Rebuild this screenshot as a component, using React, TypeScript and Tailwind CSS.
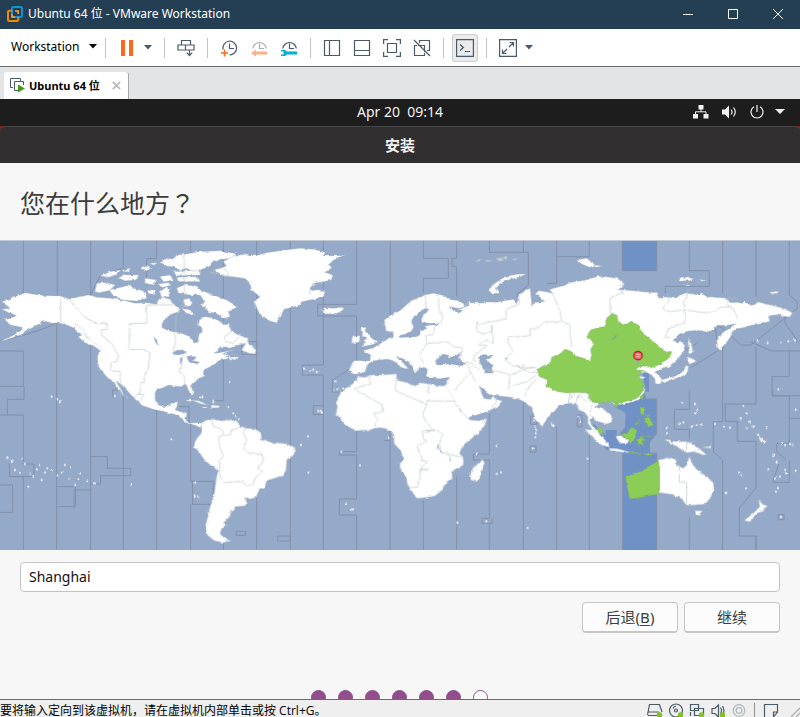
import React from "react";

const uiFont = "font-['Noto_Sans','Noto_Sans_CJK_SC',sans-serif]";
const headingFont = "font-['Noto_Sans_CJK_TC',sans-serif]";

function Separator() {
  return <span className="h-5 w-px shrink-0 bg-[#c4c4c4]" />;
}

function Caret({ className = "" }: { className?: string }) {
  return (
    <svg viewBox="0 0 8 5" className={`h-[5px] w-2 shrink-0 ${className}`} aria-hidden="true">
      <path d="M0 0h8L4 4.6z" fill="currentColor" />
    </svg>
  );
}

function ToolButton({ label, children }: { label: string; children: React.ReactNode }) {
  return (
    <button type="button" aria-label={label} className="size-[18px] shrink-0 text-[#4a5a68]">
      <svg viewBox="0 0 18 18" className="size-[18px]" fill="none" stroke="currentColor" strokeWidth="1.2">
        {children}
      </svg>
    </button>
  );
}

function TitleBar() {
  return (
    <header className="flex h-[29px] shrink-0 items-center bg-[#243f53] pb-0.5 text-white">
      <svg viewBox="0 0 16 16" className="ml-[7px] size-4 shrink-0" fill="none" strokeWidth="2">
        <rect x="5" y="1" width="10" height="10" rx="1.5" stroke="#0b95d3" />
        <path d="M5 4.8H2.200Q1 4.800 1 6v7.700Q1 15 2.200 15H10Q11.200 15 11.200 13.700V11" stroke="#f38b00" />
        <path d="M5 8v3h3M11.200 8V5H8" stroke="#f9a72b" strokeWidth="1.600" />
      </svg>
      <h1 className="ml-[5px] flex-1 text-[12px] leading-4">Ubuntu 64 位 - VMware Workstation</h1>
      <button type="button" aria-label="Minimize" className="flex h-[27px] w-[45px] items-center justify-center">
        <svg viewBox="0 0 10 10" className="size-[10px]" stroke="white"><path d="M0 5.500h10" /></svg>
      </button>
      <button type="button" aria-label="Maximize" className="flex h-[27px] w-[45px] items-center justify-center">
        <svg viewBox="0 0 10 10" className="size-[10px]" stroke="white" fill="none"><path d="M.5.5h9v9h-9z" /></svg>
      </button>
      <button type="button" aria-label="Close" className="flex h-[27px] w-[45px] items-center justify-center">
        <svg viewBox="0 0 10 10" className="size-[10px]" stroke="white"><path d="M0 0l10 10M10 0L0 10" /></svg>
      </button>
    </header>
  );
}

function Toolbar() {
  return (
    <nav className="flex h-[38px] shrink-0 items-center border-b border-[#6d6d6d] bg-white">
      <button type="button" className="ml-[11px] flex w-[94px] shrink-0 items-center pb-0.5 text-[12px] leading-4 text-black">
        <span className="w-[78px] text-left">Workstation</span>
        <Caret />
      </button>
      <Separator />
      <div className="flex w-[58px] shrink-0 items-center pl-[15px]">
        <button type="button" aria-label="Pause" className="flex w-3 justify-between">
          <span className="h-4 w-1 bg-[#ff671b]" />
          <span className="h-4 w-1 bg-[#ff671b]" />
        </button>
        <Caret className="ml-[11px] text-[#4a5a68]" />
      </div>
      <Separator />
      <div className="flex w-[42px] shrink-0 justify-center">
        <ToolButton label="Send keys">
          <path d="M4.500 6V1.500h9V6M1 6h7.500v5H1zM8.500 6H17v5H8.500zM12.500 11v5.500M9.800 13.700l2.700 3 2.700-3" />
        </ToolButton>
      </div>
      <Separator />
      <div className="flex w-[102px] shrink-0 justify-center gap-3">
        <ToolButton label="Take snapshot">
          <path d="M3.100 10.500A6.800 6.800 0 1 1 9.500 15.800M9.500 4.500v5h4.500" />
          <path d="M4.500 10.500v7M1 14h7" stroke="#ff671b" strokeWidth="1.500" />
        </ToolButton>
        <ToolButton label="Revert snapshot">
          <path d="M2.800 9.500A6.800 6.800 0 0 1 16.300 9.500M9.500 4.500v5h4.500" stroke="#a9b0b7" />
          <path d="M1 14l5-3.500v2h11v3H6v2z" fill="#ffae87" stroke="none" />
        </ToolButton>
        <ToolButton label="Manage snapshots">
          <path d="M2.800 9.500A6.800 6.800 0 0 1 16.300 9.500M9.500 4.500v5h4.500" />
          <path d="M1 11h4l2 1.500h10v3H7L5 17H1v-1.500h2.500v-3H1z" fill="#00b2d6" stroke="none" />
        </ToolButton>
      </div>
      <Separator />
      <div className="flex w-[132px] shrink-0 justify-center gap-3">
        <ToolButton label="Show library"><path d="M1.500 1.500h15v15h-15zM6.500 1.500v15" /></ToolButton>
        <ToolButton label="Thumbnail bar"><path d="M1.500 1.500h15v15h-15zM1.500 11.500h15" /></ToolButton>
        <ToolButton label="Full screen">
          <path d="M.6 5V.6H5M13 .6h4.400V5M17.400 13v4.400H13M5 17.400H.6V13M4.500 4.500h9v9h-9z" />
        </ToolButton>
        <ToolButton label="Unity"><path d="M6.500 4V1.500h10v10H14M11.500 14v2.500h-10v-10H4M5 6.500h6.500V13M1 1l16 16" /></ToolButton>
      </div>
      <Separator />
      <div className="flex w-[42px] shrink-0 justify-center">
        <span className="flex h-7 w-[26px] items-center justify-center rounded-[3px] border border-[#ccc] bg-[#e9ebec]">
          <ToolButton label="Console view"><path d="M.6.6h16.800v16.800H.6zM4 5.500l3.500 3L4 11.500M9 12.500h5" /></ToolButton>
        </span>
      </div>
      <Separator />
      <div className="flex shrink-0 items-center gap-2 pl-3">
        <ToolButton label="Stretch guest">
          <path d="M.6.6h16.800v16.800H.6zM10.500 3.500h4v4M14.500 3.500l-4.500 4.500M7.500 14.500h-4v-4M3.500 14.500L8 10" />
        </ToolButton>
        <Caret className="text-[#4a5a68]" />
      </div>
    </nav>
  );
}

function TabStrip() {
  return (
    <div className="flex h-8 shrink-0 items-end bg-[#e3e4e6] pl-1">
      <div className="flex h-[27px] w-[125px] items-center rounded-t-[3px] border-r border-[#aaa] bg-white pl-1.5">
        <svg viewBox="0 0 15 15" className="size-[15px] shrink-0" fill="none" stroke="#4a5a68">
          <path d="M3 9.500H.5v-9h10V3" />
          <path d="M13.500 7V3.500h-9v9H8" />
          <path d="M8 6.500v8l7-4z" fill="#3f9c14" stroke="none" />
        </svg>
        <span className="ml-1 w-[83px] whitespace-nowrap text-[11px] font-bold leading-4 text-black">Ubuntu 64 位</span>
        <button type="button" aria-label="Close tab">
          <svg viewBox="0 0 9 9" className="size-[9px]" stroke="#bdbdbd" strokeWidth="1.800"><path d="M.8.8l7.400 7.400M8.200.8L.8 8.200" /></svg>
        </button>
      </div>
    </div>
  );
}

function GuestBar() {
  return (
    <div className="grid h-[27px] shrink-0 grid-cols-[1fr_auto_1fr] items-center bg-[#1d1d1d] pb-0.5 text-[#f2f2f2]">
      <time className="col-start-2 whitespace-pre text-[14px] leading-5">Apr 20  09:14</time>
      <div className="flex items-center justify-end pr-[15px]">
        <svg viewBox="0 0 16 14" className="mr-[13px] h-3.5 w-4" fill="currentColor">
          <path d="M5.500 0h5v4.500h-5zM0 9h5v4.500H0zM10.500 9h5v4.500h-5z" />
          <path d="M8 4v3M2.500 9V6.800h10.500V9" fill="none" stroke="currentColor" />
        </svg>
        <svg viewBox="0 0 15 14" className="mr-[13px] h-3.5 w-[15px]" fill="currentColor">
          <path d="M0 4.500h3L7 .5v13l-4-4H0z" />
          <path d="M9 4.500q2 2.500 0 5M11.500 2.500q3.500 4.500 0 9" fill="none" stroke="currentColor" strokeWidth="1.200" />
        </svg>
        <svg viewBox="0 0 14 14" className="mr-[11px] size-3.5" fill="none" stroke="currentColor" strokeWidth="1.200">
          <path d="M4 1.800a6 6 0 1 0 6 0M7 0v7" />
        </svg>
        <svg viewBox="0 0 10 5" className="h-[5px] w-2.5" fill="currentColor"><path d="M0 0h10L5 5z" /></svg>
      </div>
    </div>
  );
}

/* Small islands as [x, y] points in map units. */
const islets: number[][] = [
  [690, 427], [912, 386], [931, 391], [940, 389], [950, 396], [1007, 424], [1003, 450], [1015, 449], [1029, 446],
  [924, 589], [903, 615], [925, 698], [955, 513], [962, 513], [966, 518], [514, 598], [584, 770], [595, 770], [586, 728], [391, 735],
  [1024, 635], [1080, 676], [1038, 790], [1056, 808], [1164, 593], [1490, 618], [1430, 642], [1490, 702], [1503, 697],
  [1372, 848], [1459, 844], [1602, 540], [1606, 560], [1608, 570], [1607, 580], [1606, 592], [1598, 625], [1583, 864],
  [1735, 530], [1740, 545], [1763, 656], [2047, 488], [2085, 492], [2092, 510], [2088, 520], [2050, 547], [2038, 552],
  [2000, 565], [1998, 580], [2075, 560], [2090, 556], [2105, 554], [2145, 552], [2172, 560], [2190, 563], [2230, 497],
  [2222, 537], [2240, 520], [2250, 545], [2240, 565], [2260, 560], [2275, 585], [2287, 597], [2297, 607], [2300, 563],
  [2320, 645], [2345, 610], [2355, 615], [2370, 612], [2378, 613], [2305, 688], [2330, 668], [2340, 710], [2355, 690],
  [2358, 700], [2325, 715], [2387, 509], [2387, 692], [2334, 744], [2328, 755], [2238, 745], [2179, 759], [2343, 831],
  [2217, 698], [2225, 705], [2273, 302], [2303, 309], [2342, 307], [2365, 304], [2385, 302], [2335, 448],
  [65, 655], [92, 700], [110, 688], [135, 700], [155, 692], [175, 705], [185, 697], [208, 715], [235, 718], [262, 722],
  [120, 675], [142, 685], [195, 675], [210, 682], [240, 700], [75, 672], [100, 710], [125, 720], [225, 735], [285, 730],
  [45, 690], [60, 698], [85, 740], [22, 655], [38, 662], [155, 470], [172, 478], [180, 484], [345, 468],
  [570, 480], [600, 473], [640, 486], [700, 520], [708, 528], [715, 538], [712, 552], [607, 472],
];

function WorldMap() {
  return (
    <svg viewBox="0 0 2400 930" className="block h-auto w-full shrink-0" role="img" aria-label="World time zone map">
      <defs>
        <filter id="coast" x="0" y="0" width="100%" height="100%" filterUnits="userSpaceOnUse" colorInterpolationFilters="sRGB">
          <feTurbulence type="fractalNoise" baseFrequency="0.07" numOctaves="2" seed="4" />
          <feDisplacementMap in="SourceGraphic" scale="9" xChannelSelector="R" yChannelSelector="G" />
        </filter>
      </defs>
      <rect width="2400" height="930" fill="#95a9c9" />

      {/* selected UTC+8 band */}
      <g fill="#6f91c6">
        <path d="M1867 0h103v92h-103z" />
        <path d="M1925 380h22v75h-12l3 22h30l2 103-20 25v32l20 3v290h-102V640l-48-10-50-65 12-12 35 32v-15h33v22l25-30 2-44-35-18 20-15 55-10 20-25z" />
      </g>

      {/* zone boundaries over water */}
      <g fill="none" stroke="#8290aa" strokeWidth="3">
        <path d="M70 0v160M172 0v167M272 0v165M370 0v83L300 108l-28 57M470 0v56h-30v80M572 0v38M670 0v245M770 0v930M871 0v930M970 0v375h-63v30h63v525M1070 0v193h-117v35h117v145l-73 48v35h20M1171 0v225" />
        <path d="M0 333h70v106H0M0 302Q90 285 170 250V930M272 310v620M340 470h-2v-20h25M370 470v460M470 500v430M572 550v174h68v70M572 724h6v69h62M572 793v137M670 330v152h-33M670 902v28M748 305h22v38h-45v-28M537 500h30v50M970 497h-30v27h30M833 888h38v15h-38zM709 874h28v12h-28z" />
        <path d="M70 930V710h32v-38H70V525H22V478h50V440M0 525h22M0 735h38v82H0M70 710H28v-40M172 740h55v60h-55M272 650h50v35h70v22h-90v25h-30M272 750h-50v55" />
        <path d="M1270 0v55h75v60h-75v43M1370 0v55h-14v24h14v90M1468 0v37h117v98l-33 27v15M1570 0v37M1670 0v130h-28M1670 50h98V0M1867 0v92h103V0M2068 0v92h60v47h-132v20M2168 0v160M2268 0v170M2368 0v165l24 20v20l-140 110h-30l-54-50v0l-22-10 4 44 22 22-100 62M2168 320v225h-28v90l28 25v270M2092 315M2250 305l65 28h85M2355 230v20l40 55M2268 320v172h-92v52h36v60h56v140l-50 60v84h50v42M2368 330v80h-52v57h52v68h32M2368 467h32M2368 535v75h-38v25l28 24" />
        <path d="M1070 570v65h-52v10h52v132h-52v48h52v105M1170 570v32h-18M1170 602v328M1270 780v150M1370 710v220M1468 520v122h-48v18h48v175h-22v15h30v-15M1468 850v80M1570 480v450M1670 560v370M1768 570v360M1868 640v290M1970 637v293M1970 477v103l-20 25M1938 477h32M2068 450v58h-45v60h45v30M2068 830v100M2318 450v18h50M2268 888v42M2368 660v67h-50l18-55M2334 824h18v15h-18zM1590 618h18v18h-18zM1592 528h18v25h-18zM1732 525h14v36h-14zM1990 370l100-60M1995 368l45-20" />
      </g>

      <g filter="url(#coast)">
        <g fill="#fff" stroke="#b5c0c6" strokeWidth="1" strokeLinejoin="round">
          {/* North and Central America */}
          <path d="M5 208l25-3-10-10-12-12 22-3 10-10 20-5 15-7 25 5 35 4 45 1 30 10 20-6 35-7 25 7 40 3 45 7 30 8 30-2 35 5 5-13 10-8 25 6 10 17 20 10-5 10-20 7-15 10-13 13-2 17 15 8 17 5 23 3 30 12 15 20 10-5 0-20 12-10-2-13-10-7 5-20 15-5 30 5 15 10 15 10 10-5 5 15 5 10 15 8 20 7 13 8-3 10-25 7-30 7-25-2-15 20 30-5 25-5 5 10-30 10 20 2 20-2-5 10-25-5-30 7-10 10-15 8-20 10v20l-15 5-15 15-7 10 7 15-2 10-8-5-7-15-3-10-20 5-35-5-20 10-15 2-5 13v20l10 15 15 5 20-2 5-10 18-3-3 15-5 10 15 5 20 3-3 22 10 10 23-2 17 2-6 13-6-3-15-7-15-2-20-13-10-12-30-8-20-5-25-5-35-12-10-13-22-18-10-12-20-20-15-10 20 35 20 20-35-30-10-22-20-13-20-22-10-15v-30l7-10-2-10-20-15-25-20-20-15-13-13-17-7-25-7h-25l-25-8-10 10-15 8-15 7-20 15-25 10-25 8-15 4 35-16 20-11 10-13-15-4-20-3-15-10-2-10 27-5 5-5z" />
          <path d="M235 290l20 18 30 12 20 15-5-15-25-16-25-20zM222 250l20 18 25 30-15-30z" />
          {/* Canadian Arctic */}
          <path d="M480 65l20-10 20 3 10-13 30-3 40-7 60-3 50 10-20 13-50 7-15 18-25 10-20 5-20-10-20 5-20-10-20-2zM300 108l30-13 30-5-15 15-15 5zM285 155l5-25 30-2 25 7-15 15-30 8zM328 150l42-10 20-5 10 10 30 8 10 22-30 8-40-3-30-13zM355 115l20-10 40 0-5 15-35 2zM420 85l20-10 15 10-15 8zM435 115l35 5-10 15-25-5zM480 110l30-5 10 15-30 5zM520 95l80-5v15l-70 2zM530 112l60-2 10 15-65-1zM530 145l20-10 40 3 10 12 40 15 40 15 32 20-17 10-10 5 5 15-20 5-20-15-25-5-10-15-15-5 15-10-15-20h-30l-30-5zM480 155l20-15 12 10-7 20-20 2zM550 180l20-5 8 20-23 5zM545 205l25 5 15 15-25-5zM365 92l25-8-5 12zM450 70l20-2-5 9zM475 132l30-4 8 8-28 6zM445 148l20 3-4 14-16-5z" />
          {/* Greenland, Iceland, Newfoundland */}
          <path d="M640 92l20-7 20-7-10-13 30-17 40-6 25 6 35-10 40-6 60-7 40 3 35 9-5 11 65-1-35 13-15 15 10 10-25 10 28 10-8 15-18 5-32 5-10 20 45 5-5 15-30 8-35 7-5 10-30 8-20 5-5 17-15 23-20-5-20-11-18-22-7-25 15-15-25-20-5-20-20-15-30-5-30-2-10-8zM962 207l10 6-2-10 30 2 25-3 3 8-13 8-20 5-20-3zM725 330l20-32 5 17 18 15-3 12-25-4z" />
          {/* South America */}
          <path transform="translate(390 450)" d="M213 103l12-11 20-5 15 3 15 2 30-2 20 8 5 10 20 7 25 2 13 8 7 15-5 12 15-2 30 8 35 4 23 11 4 10-17 22-10 7-2 28-10 18-18 4-30 10-5 18-20 15-7 17-18 5-17-5 9 18-7 7-30 3-3 12-12 3 2 10-12 15-10 8 10 7-15 10-5 17 15 13 15 7-22 6-28-8-18-15-5-30 8-30 8-35 10-30 5-35 5-37-23-13-20-20-15-23-13-10 3-17 10-15 10-10v-15z" />
          <path d="M560 480l35 2 30 13-20-3-25-10-18 2zM635 495l25 3-5 5-22 0zM676 499h12v3h-12zM608 501h12v3h-12zM575 452l9 10-6-2z" />
          {/* Europe and Asia */}
          <path d="M1060 362h30l20 1 2-18-22-13 25-7 15-7 15-10 17-10 16-3-2-20-18-2-5-33 20-15 27-13 25-22 25-15 25-10 25-5 35 8 10 10 30 4 17 10 0 10-18 3-25-5 10 10 30-5 15-8v-12l12 5 14-5 6 9 24-8 30 1 20-4 30-5 10 12 5-20 20-18 15-7 3 27 2 28 6-12 30-3-10-13-15-10 10-10 30 5 15 5-12-12 7-4 28-7 30-12 40-6 40-12 30 2 30 5 18 15-3 10-15 8 30 2 50 5 40 2-2 10 12 8 10-5 35 3 10-8 20-7 25 5 20-3 20 10 50 3 20 14 40-2 15 10 15-2 10-8 40 10 40 10 23 13-8 12-20-3-15-4-20 2-10 5 5 13-25 7-30 5-30 8-22 2-3 12-15 23-25 30-7-10-1-20 13-20 30-20 12-10-27 5-30 0-10 10-15 10-30-5-30 2-25 8-20 20 10 8 15-3 10 10-5 20-15 20-25 22-20 6-25 12 10 8 12 15-4 12-15 1-3-18-10-10-15-7-20 2-10 10 27 2-17 10 5 13 10 15v6l-15 22-20 8-25 6-25 4-25-9-15-3-15 10-10 7 15 5 15 5 17 13 6 12-3 12-15 5-10 3-5-8-17-4-10-13-8 10 5 15 13 12 12 13v12l-20-12-7-20-8-10v-20l-10-13-17-7-8-15-15-5-30 3-20 17-17 17-13 18-7 15-18-17-10-25-4-18-13-4-13-13-22-8-25-5-25-2-20-2-25-16-10-8-5-4 10 28 10 11 15 1 7-10 9 10 18 5-12 16-30 15-35 11-30 8-20-27-25-30-15-25-12-10 12-8 5-12 5-10-30 5-20-3-20-4 0-10 0-15-20-5-5 18-10 2-7-15-13-20-20-10-15-5 10 13 20 17 5 8-15-3-20-15-10-7-15-5-20 2-25 3-15 10-10 25-25 5-10-1-13-7z" />
          <path d="M1082 265l16-3-3 13 10 5 5 10 12 8 8 7-5 7-25 5-15 3 12-12-7-3 10-10-12-10zM1057 290l23-3-2 18-23 5zM1465 150l20-20 30-20 35-7 28-1-18 8-30 8-30 12-15 15 13 15-23 0zM1730 60l30-5 25 20-15 7-25-10zM1780 75l25 3-15 4zM2035 115l15-4 30 5-10 6-30 0zM2095 118l25 4-15 1zM2310 157l25-3-3 6-20 1zM2052 132l22 5-15 0z" />
          <path d="M2062 350l28 12-20 10-10-7zM2065 378l-3 22-22 12-25 6-25 12-5-10 40-12 25-13 8-18zM2065 292l10 23 3 20-13 10 3-25zM1653 545l12 13-10 7z" />
          {/* Africa */}
          <path transform="translate(960 390)" d="M115 20l20 2 20-7h30l45-3v18l30 8 25 10 15-10 25 4 35 6 18 0 12 17 15 30 15 25 20 20 10 10 25 2 25-7-5 20-15 20-25 20-25 20-12 25 12 12v23l-25 13-10 7 2 20-19 15-13 20-20 18-25 4-30 3-10-15-18-25-4-25-18-25v-15l12-15-12-25-18-20v-25l-12-13-15-7-25-3-20 8-42 2-33-17-15-20-12-15 4-20-2-20 15-25 20-15 15-10zM488 265l5 15-13 40-10 15-18-5v-20l8-20 15-10z" />
          {/* Oceania */}
          <path transform="translate(1620 450)" d="M358 210l27-7 20 4 5 8-5 7 25 13 10-10 8-25 12 25 15 20 25 13 20 22 2 20-12 25-15 17-30 3h-25l-15-15-7-12-13 4-15-10-32-4zM465 362l22 1-7 14-12-5zM375 148l17 2v8l18-3 30 0 25 10 15 13 20 17-10 0-25-10-25 3-15-8-15-12-20-6zM135 118l20 2 30 20 20 20 3 12-23-7-25-20zM207 175l23 1 40 11-15 1-45-6zM227 140l13-5 28 15-6 10h-22zM655 328l15 17h15l-20 20-15 5-20 25-18-3 28-22 20-20zM463 38l10 20-3 18 2-20zM487 172l25-4 5-8-7 14zM650 130l15 18 12 8-2 5-12-5z" />
          <path d="M1425 62l20-4-8 8zM1455 60l20 2-15 3zM1490 58l15-6 5 8-15 5zM1510 52l12-4-4 12zM1535 58l20-3-10 5z" fill="#c5cec9" />
        </g>

        {/* lakes and inland seas */}
        <g fill="#95a9c9">
          <path d="M1235 240l10-15 15-10 15-10 13 3-13 12-10 15v12l25 3 30-2-2 5-43 5 5 7-5 7-13-4-2 17-10 5-30 2-20 1v-8l30-5 10-18-5-12zM1307 370l8-20 13-8 17 3 5 7 20-7 13-8-8 18 23 15-13 8-35-6-25 3-15 0zM1435 352l15-9 25 2-3 10-14 3 22 20-5 7 5 15-25 0-7-15-8-15zM1515 353l8 2-3 5zM1350 202l20 5 18 4-8 7-18-4z" />
          <path d="M515 340l20-12 25 7-5 7-25 3zM540 350l8 0-3 25-5-5zM560 348l30 2-10 12 20 4-10 6-25-8zM460 293l10 5 6 20-8-8zM665 342l35-12 12 6-20 10zM1314 610l3 18 12 12-8-3-10-15zM1350 645l3 20-4-2z" />
        </g>

        {/* UTC+8 land */}
        <g fill="#8ccd57" stroke="#83ae67" strokeWidth="1.500">
          <path d="M1612 388l18-10 22-8 3-18 20-7 20-17 20 7 10 13 25 7 20 10 5-20-3-15 8-20-10-15-10-5 12-20 28-8 15-2 3-20 17-22 15 10 5 17 15 10 25-8 20 8 5 15 15 15 25 20 25 20 10 10 20 0-5 15-20 18-40 17-15-7-17 2-13 10 27 2-17 10 5 13 10 15v20l-15 22-20 8-25 6-25 4-30-4-18 3-22-3-10-12 2-15-35-2-30 2-30-5-35-15 5-20-25-10z" />
          <path transform="translate(1620 450)" d="M358 215l-13 3-20 14-15 11-30 7-22 12 2 23 5 20 3 20 22 0 30-7 38-6zM232 138l30-10 13-16 15 8-5 25-15 20-2-17-28-15zM292 150l8-10 30-2-30 7 20 5-15 3 10 17-15-10-2 12zM300 55l13-3 2 20-12 3zM310 85l20 0 10 20-15 8-4-15zM168 112l17 3 7 20-14-5zM300 20l10-8-2 18zM225 38l13 2-8 12zM285 103l15-15-12 18zM318 72l10 8-6 2zM272 187l30 2v3l-28-2zM310 190l30 2-15 5z" />
        </g>

        {/* zone boundaries over land */}
        <g fill="none" stroke="#bcc6c4" strokeWidth="2">
          <path d="M182 168v80M210 178l10 18 40 40 35 15h27v18h-18v15l30 25 22 40-5 15-18 5v25h28v80M525 195h-85v55h-52v78h40l22 10-5 50-12 15v25h-12v25l-15 20M522 275l5 30-8 30M545 375l-5 20 14 20v25M553 40v140l-25 50v45M690 250l5 25-22 15 5 15 20 5 20-20M420 485l12-22h-20M630 96l60 12-18-25M930 165q-5-40 40-40" />
          <path transform="translate(390 450)" d="M245 87l5 22 25 8 8 20 18-2 5-15 20-8M280 135l-15 5 5 35 10 20-10 15-2 50 15 18 55-5 10 15 20-5 8-20 22-18-15-10 15-20v-22l-45-5-12-15 10-25-13-20 10-20" />
          <path d="M1275 165l5 45M1315 172l2 35 12 25-8 18M1278 290l2 20-20 35 10 25M1280 310l65-4 15 14 27 3-5 30M1305 255l-5 28-25 5M1370 360l45 10 25 20M1400 372l12 25-15 15-35 40M1412 397l15 30M1555 178l5 12-42 20v27l-80 15-8-5v25l20 10 25-8v-20l5 55-25-8-20 15 25 0-25 20-15 15 5 15M1650 155l15 20 15 40 5 28 25 10v25l5 45M1683 245l-48 0-20 17-25 5v20l-65 5-2 12 15 30-25 25 25 18 30 8 20 12 30 0M1575 375l-25 5 40 4 20-2M1455 390l45 5 30 10 50-20 20-4M1530 405l-5 45M1530 440l50-15 30-20M1610 415l-30 35-5 20M1710 455l5 20 10-20M1730 475l20-20" />
          <path d="M1870 165l-10-30M1870 155l-40 20v45M2002 160l5 25-20 20 20 10 45-5 5 20-5 20-45 12-12 30 15 0M2065 145l-5 25-10 15 5 25 60 8 30-2 15-15 30 0 10 5 12 30M2210 175l-30-2 0 20 15 12" />
          <path transform="translate(960 390)" d="M150 20v22l-48 15 85 48v20l-25 5 10 20-8 20M230 15l-5 45 30 15 65 28-12 30 10 25 25 22-35 2 2 25 10 5-25 15v20l10 10v15h12v10l-12 8v15l20-5M320 103v-10h85M325 45v25M318 182l35 0 15 10-10 30 5 25 65 15M325 297h-25v25l-8 30h-28M530 78l-2 18-15 25" />
          <path transform="translate(1620 450)" d="M418 222v55h22v65M90 10l-5 25 20 10 10-30 25 20M150 10v25M155 45l-5 30 10 10M440 155v32" />
        </g>

        {islets.map(([x, y]) => (
          <circle key={`${x}-${y}`} cx={x} cy={y} r="3.300" fill="#f3f5f8" />
        ))}
      </g>
      <path d="M0 1.500h2400" stroke="#c4cad3" strokeWidth="3" />

      {/* Lake Baikal */}
      <path d="M1812 310q28-8 38-28q0 18-38 28z" fill="#6f91c6" />

      {/* location pin */}
      <path d="M1913 355v15" stroke="#a4aaa5" strokeWidth="7" />
      <circle cx="1914" cy="347" r="12.500" fill="#f06f72" stroke="#c5151b" strokeWidth="4" />
      <path d="M1907 343h14M1908 350h12" stroke="#ffb9b9" strokeWidth="3" />
    </svg>
  );
}

function Installer() {
  const pages = [true, true, true, true, true, true, false];
  return (
    <main className="flex min-h-0 flex-1 flex-col overflow-hidden bg-[#f7f7f7] text-[#3d3d3d]">
      <div className="shrink-0 bg-[#8f1a1a]">
        <h2 className="flex h-[37px] items-center justify-center rounded-t-[5px] border-t border-[#464646] bg-[#312f30] text-[15px] font-bold leading-5 text-[#f4f4f4]">
          安装
        </h2>
      </div>
      <h3 className={`flex h-[77px] shrink-0 items-center px-5 text-[25px] leading-8 ${headingFont}`}>您在什么地方？</h3>
      <WorldMap />
      <form className="flex shrink-0 flex-col gap-2.5 px-5 pt-3" onSubmit={(e) => e.preventDefault()}>
        <input
          aria-label="City"
          defaultValue="Shanghai"
          className="h-[30px] w-full rounded border border-[#c3c3c3] bg-white px-2 pb-0.5 text-[14px] leading-5 text-[#111] outline-none"
        />
        <div className="flex justify-end gap-1.5">
          <button type="button" className="h-[31px] w-24 rounded border border-b-2 border-[#c6c6c6] bg-[#fcfcfc] text-[15px] leading-5">
            后退(<u className="underline-offset-2">B</u>)
          </button>
          <button type="submit" className="h-[31px] w-24 rounded border border-b-2 border-[#c6c6c6] bg-[#fcfcfc] text-[15px] leading-5">
            继续
          </button>
        </div>
      </form>
      <div className="mt-auto flex h-[9px] shrink-0 justify-center gap-3 overflow-hidden pr-px">
        {pages.map((done, i) => (
          <span key={i} className={`size-[15px] shrink-0 rounded-full border border-[#924d8b] ${done ? "bg-[#924d8b]" : "bg-white"}`} />
        ))}
      </div>
    </main>
  );
}

function StatusBar() {
  return (
    <footer className="flex h-[18px] shrink-0 items-end border-t border-[#6d6d6d] bg-[#efefef]">
      <p className="flex-1 whitespace-nowrap font-['Open_Sans','Noto_Sans_CJK_SC',sans-serif] text-[12px] leading-3 text-black">
        要将输入定向到该虚拟机，请在虚拟机内部单击或按 Ctrl+G。
      </p>
      <svg viewBox="0 0 153 14" className="h-3.5 w-[153px] shrink-0" fill="none" stroke="#4a5a68" strokeWidth="1.200">
        <path d="M.5 12l2-10.500h10L15 9M1 9h11M1 12.500h11" />
        <circle cx="29" cy="7.500" r="6.500" />
        <circle cx="29" cy="7.500" r="1.500" />
        <path d="M26 5.500q1-2.500 3-2.500" />
        <path d="M43.500 1.500h8v6h-8zM47.500 5.500h9v7h-9zM43.500 9v4" />
        <path d="M65 5.500h3l3.500-3.500v12L68 10.500h-3zM73.500 4.500q2 3 0 6M75.500 3q2.500 4 .5 8" />
        <circle cx="92" cy="7.500" r="5.800" stroke="#b3b7ba" />
        <circle cx="92" cy="7.500" r="2.800" stroke="#b3b7ba" />
        <path d="M107.500 0v14" stroke="#999" />
        <path d="M117.500 14V1.500h13V9l-4 5M130.500 9h-4v5" />
        <path d="M144 14l9-9M149 14l4-4" stroke="#aaa" />
        <g fill="#7fc31c" stroke="none">
          <circle cx="12.500" cy="12" r="2.700" />
          <circle cx="33.500" cy="12" r="2.700" />
          <circle cx="54.500" cy="12" r="2.700" />
          <circle cx="75.500" cy="12" r="2.700" />
        </g>
      </svg>
    </footer>
  );
}

export default function App() {
  return (
    <div className={`flex h-screen flex-col overflow-hidden bg-white ${uiFont}`}>
      <TitleBar />
      <Toolbar />
      <TabStrip />
      <GuestBar />
      <Installer />
      <StatusBar />
    </div>
  );
}
